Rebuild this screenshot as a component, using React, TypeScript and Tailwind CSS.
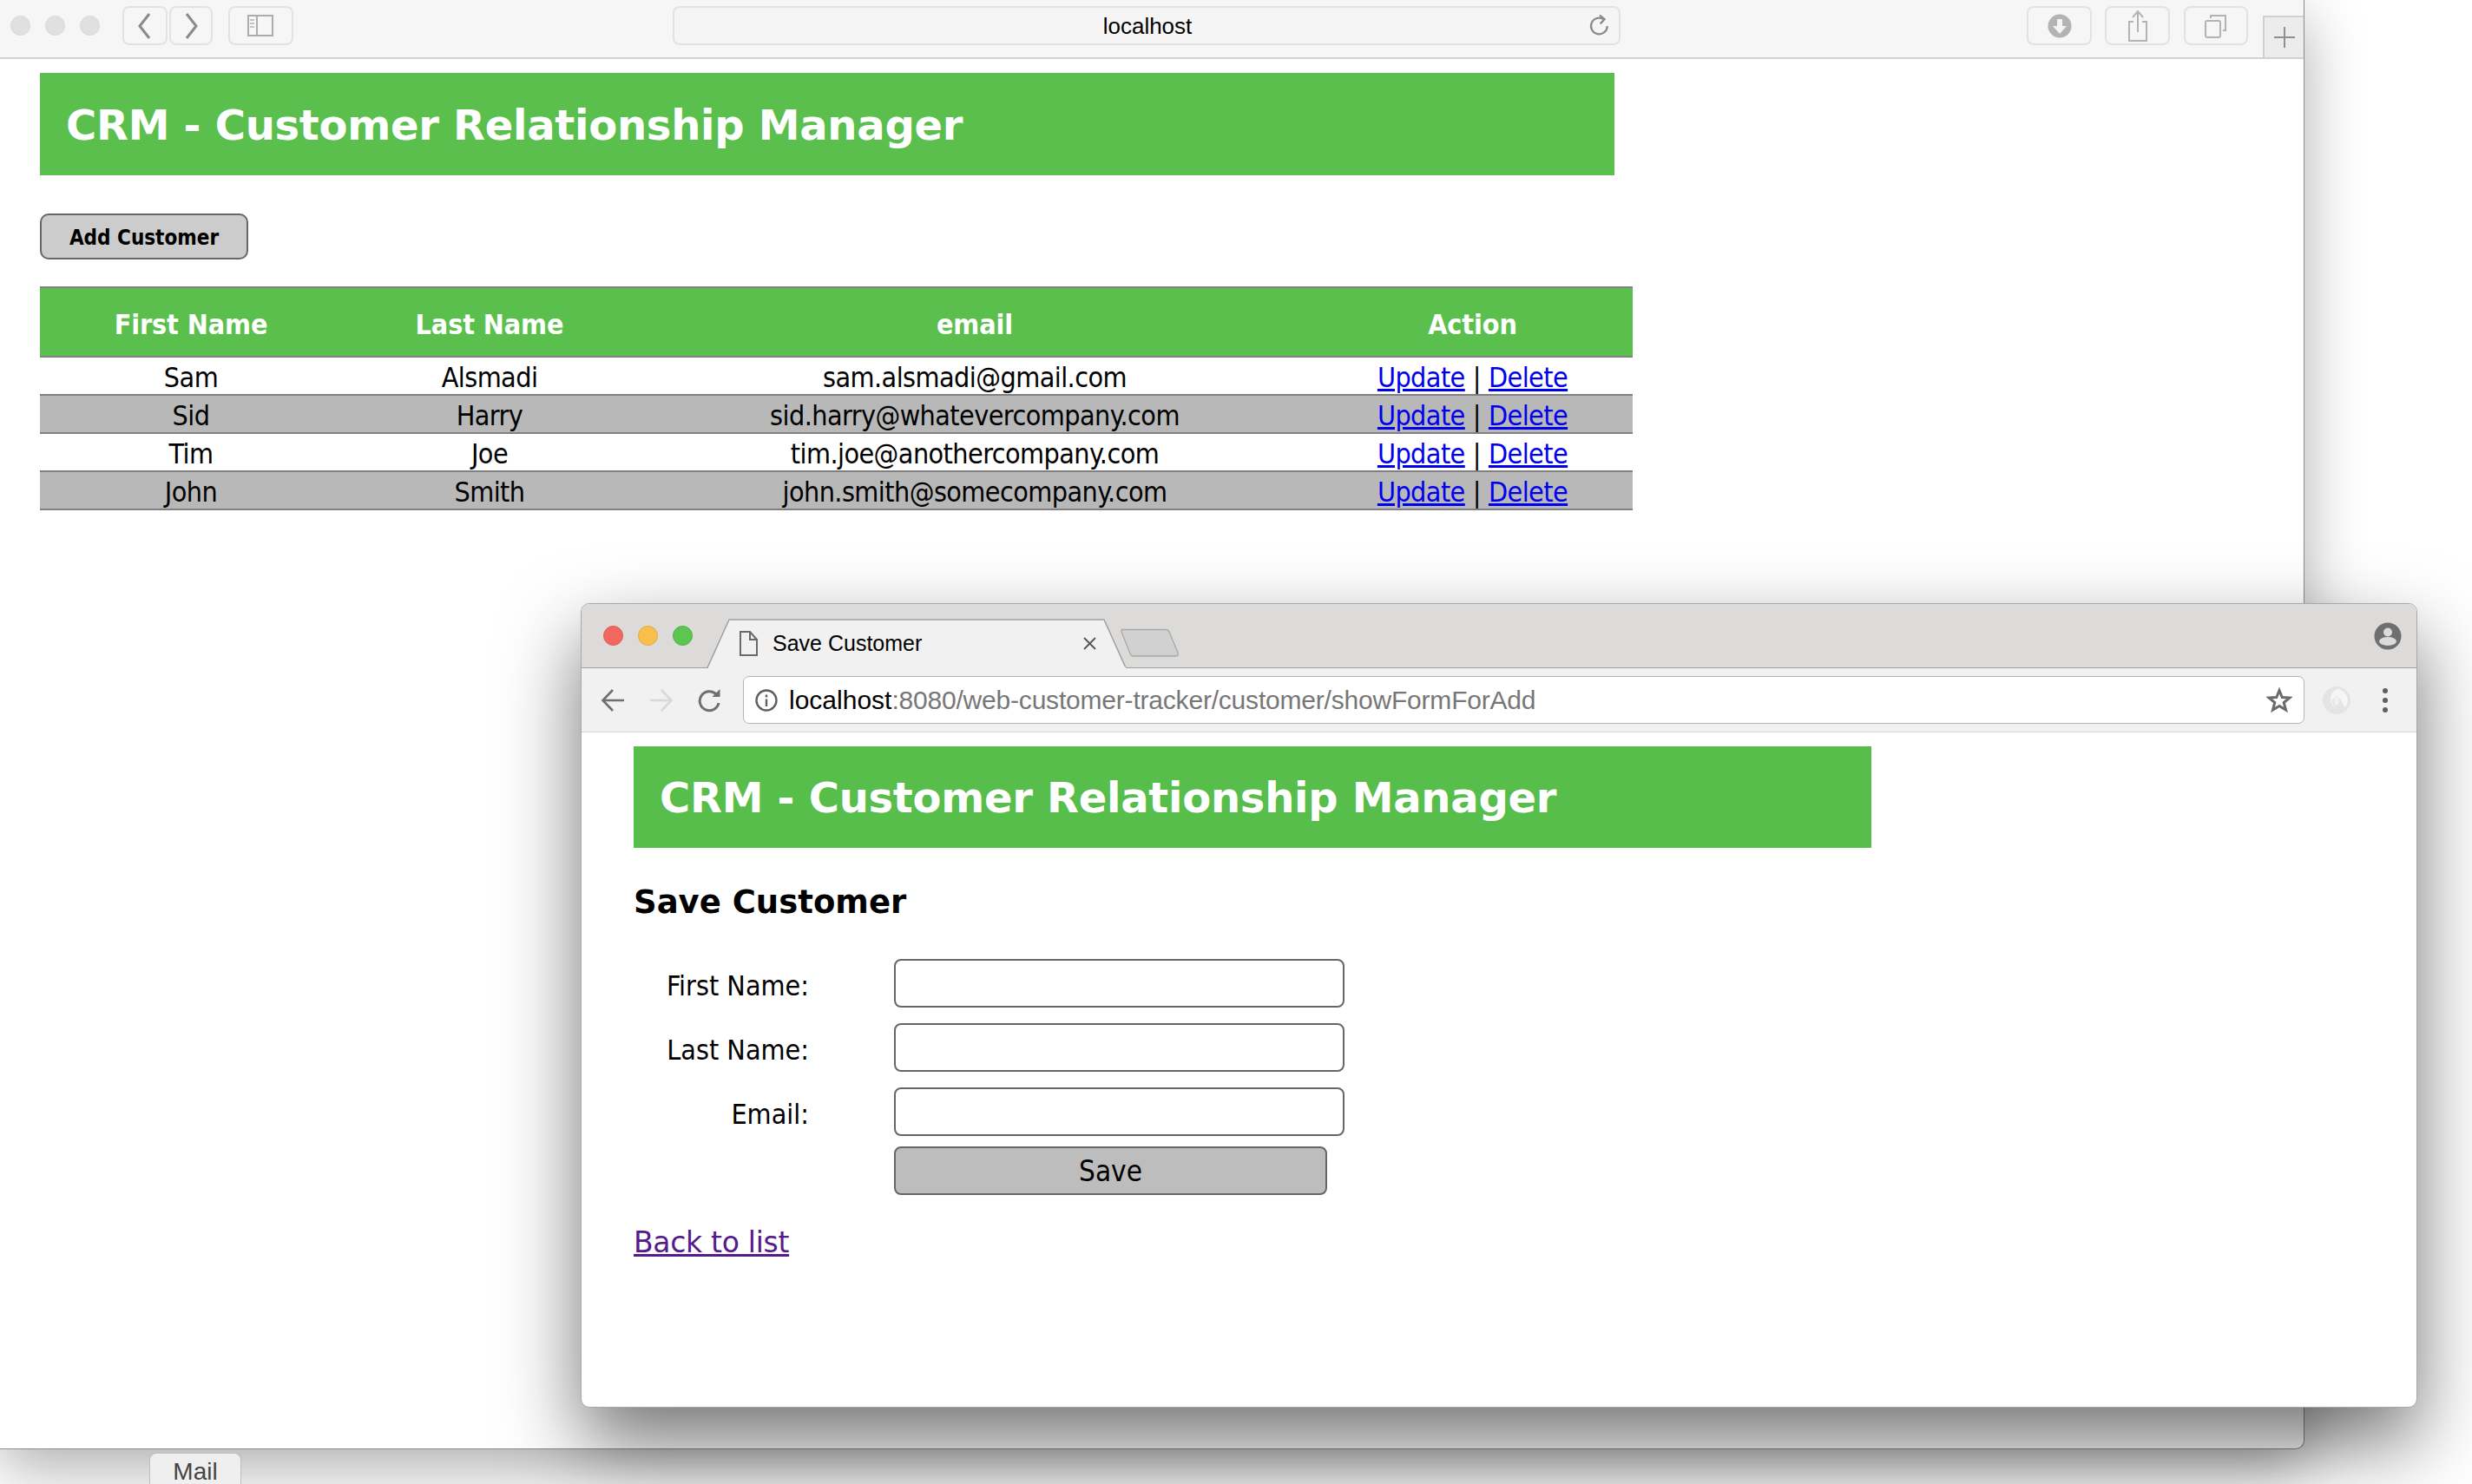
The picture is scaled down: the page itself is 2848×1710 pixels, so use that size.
const TITLE = "CRM - Customer Relationship Manager";
const rows = [
  ["Sam", "Alsmadi", "sam.alsmadi@gmail.com"],
  ["Sid", "Harry", "sid.harry@whatevercompany.com"],
  ["Tim", "Joe", "tim.joe@anothercompany.com"],
  ["John", "Smith", "john.smith@somecompany.com"],
];

function SafariButton({ className, children }: { className: string; children?: React.ReactNode }) {
  return (
    <div className={`flex h-[45px] items-center justify-center rounded-[8px] border-2 border-[#e2e2e2] bg-[#f6f6f6] ${className}`}>
      {children}
    </div>
  );
}

function BackWindow() {
  return (
    <div className="absolute left-0 top-0 flex h-[1670px] w-[2655px] flex-col rounded-br-[10px] border-r border-b border-[#8a8a8a] bg-white shadow-[0_22px_70px_rgba(0,0,0,0.32)]">
      <div className="flex h-[68px] shrink-0 items-start border-b-2 border-[#d2d2d2] bg-[#f6f6f6] pt-[7px]">
        <div className="ml-[12px] mt-[11px] flex gap-[17px]">
          <div className="h-[23px] w-[23px] rounded-full border border-[#d8d8d8] bg-[#e0e0e0]" />
          <div className="h-[23px] w-[23px] rounded-full border border-[#d8d8d8] bg-[#e0e0e0]" />
          <div className="h-[23px] w-[23px] rounded-full border border-[#d8d8d8] bg-[#e0e0e0]" />
        </div>
        <SafariButton className="ml-[26px] w-[52px]">
          <svg width="20" height="34" viewBox="0 0 20 34" fill="none" stroke="#8a8a8a" strokeWidth="3"><path d="M15 3 L4 17 L15 31" /></svg>
        </SafariButton>
        <SafariButton className="ml-[2px] w-[50px]">
          <svg width="20" height="34" viewBox="0 0 20 34" fill="none" stroke="#8a8a8a" strokeWidth="3"><path d="M5 3 L16 17 L5 31" /></svg>
        </SafariButton>
        <SafariButton className="ml-[18px] w-[75px]">
          <svg width="32" height="25" viewBox="0 0 32 25" fill="none" stroke="#adadad" strokeWidth="2"><rect x="1" y="1" width="28" height="23" /><path d="M11 1 V24" /><path d="M3 6 H8 M3 10 H8 M3 14 H8" stroke="#c4c4c4" /></svg>
        </SafariButton>
        <div className="relative ml-[437px] flex h-[45px] w-[1092px] items-center justify-center rounded-[8px] border-2 border-[#e2e2e2] bg-[#f5f5f5] font-['Liberation_Sans',sans-serif] text-[26px] text-black">
          <span className="ml-[2px] mt-[2px]">localhost</span>
          <svg className="absolute right-[7px] top-[6px]" width="30" height="30" viewBox="0 0 24 24" fill="none" stroke="#8a8a8a" strokeWidth="1.8"><path d="M19 12a7.5 7.5 0 1 1-3.4-6.3" /><path d="M12 2 L16.5 5.7 L12.5 10" /></svg>
        </div>
        <SafariButton className="ml-[468px] w-[75px]">
          <svg width="28" height="28" viewBox="0 0 28 28"><circle cx="14" cy="14" r="13.5" fill="#b3b3b3" /><path d="M11 6h6v8h5l-8 9-8-9h5z" fill="#f4f4f4" /></svg>
        </SafariButton>
        <SafariButton className="ml-[15px] w-[75px]">
          <svg width="24" height="38" viewBox="0 0 24 38" fill="none" stroke="#b3b3b3" strokeWidth="2"><path d="M7 14H2v22h20V14h-5" /><path d="M12 26V2M6 9l6-7 6 7" /></svg>
        </SafariButton>
        <SafariButton className="ml-[16px] w-[74px]">
          <svg width="26" height="28" viewBox="0 0 26 28" fill="none" stroke="#b3b3b3" strokeWidth="2"><rect x="1" y="8" width="17" height="19" rx="2" /><path d="M7 5V2h17v17h-3" /></svg>
        </SafariButton>
        <div className="ml-[17px] mt-[11px] flex h-[48px] w-[47px] items-center justify-center self-start border-l-2 border-t-2 border-[#d0d0d0] bg-[#ececec]">
          <svg width="24" height="24" viewBox="0 0 24 24" stroke="#8f8f8f" strokeWidth="2"><path d="M0 12H24M12 0V24" /></svg>
        </div>
      </div>

      <div className="flex flex-col pl-[46px] pt-[16px] font-['DejaVu_Sans_Condensed','DejaVu_Sans',sans-serif]">
        <div className="flex h-[118px] w-[1814px] items-center bg-[#5bbf4e] pl-[30px] pt-[2px] font-['DejaVu_Sans',sans-serif] text-[48px] font-bold tracking-[-0.27px] text-white">
          {TITLE}
        </div>
        <button className="mt-[44px] h-[53px] w-[240px] rounded-[10px] border-2 border-[#666666] bg-[#cccccc] pt-[2px] text-[24px] font-bold text-black">
          Add Customer
        </button>
        <table className="mt-[31px] w-[1835px] table-fixed border-separate border-spacing-0 text-center text-[32px] tracking-[-0.57px] text-black">
          <colgroup>
            <col className="w-[348px]" />
            <col className="w-[340px]" />
            <col className="w-[778px]" />
            <col className="w-[369px]" />
          </colgroup>
          <thead>
            <tr className="font-bold tracking-[-0.1px] text-white">
              {["First Name", "Last Name", "email", "Action"].map((h) => (
                <th key={h} className="h-[82px] border-y-2 border-[#808080] bg-[#5bbf4e] p-0 pt-[6px]">{h}</th>
              ))}
            </tr>
          </thead>
          <tbody>
            {rows.map((r, i) => (
              <tr key={r[0]} className={i % 2 ? "bg-[#b8b8b8]" : "bg-white"}>
                {r.map((c) => (
                  <td key={c} className="h-[44px] border-b-2 border-[#808080] p-0 pt-[4px] leading-[38px]">{c}</td>
                ))}
                <td className="h-[44px] border-b-2 border-[#808080] p-0 pt-[4px] leading-[38px]">
                  <a href="#" className="text-[#0000ee] underline">Update</a>
                  <span className="mx-[9px]">|</span>
                  <a href="#" className="text-[#0000ee] underline">Delete</a>
                </td>
              </tr>
            ))}
          </tbody>
        </table>
      </div>
    </div>
  );
}

function FrontWindow() {
  return (
    <div className="absolute left-[669px] top-[695px] flex h-[927px] w-[2116px] flex-col overflow-hidden rounded-[10px] border border-[#a8a8a8] bg-white shadow-[0_40px_90px_rgba(0,0,0,0.55)]">
      <div className="flex h-[74px] shrink-0 items-center border-b border-[#a0a0a0] bg-[#dcdbda]">
        <div className="ml-[25px] flex gap-[17px]">
          <div className="h-[23px] w-[23px] rounded-full border border-[#dc5a50] bg-[#f2685e]" />
          <div className="h-[23px] w-[23px] rounded-full border border-[#e0a93c] bg-[#f8c04a]" />
          <div className="h-[23px] w-[23px] rounded-full border border-[#4fae44] bg-[#5cc650]" />
        </div>
        <div className="relative z-10 ml-[16px] -mb-px h-[57px] w-[485px] self-end">
          <svg className="absolute inset-0" width="485" height="57" viewBox="0 0 485 57">
            <path d="M0 56.5 H1 L26 1 H458 L483 56.5 H485" fill="#f1f1f1" stroke="#a0a0a0" strokeWidth="1.5" />
            <rect x="2" y="55.5" width="481" height="2" fill="#f1f1f1" />
          </svg>
          <div className="relative flex h-full items-center pl-[38px] font-['Liberation_Sans',sans-serif] text-[25px] text-black">
            <svg width="21" height="29" viewBox="0 0 21 29" fill="none" stroke="#6a6a6a" strokeWidth="2"><path d="M1 1H12L20 10V28H1Z" /><path d="M12 1V10H20" /></svg>
            <span className="ml-[17px]">Save Customer</span>
            <svg className="ml-[186px]" width="15" height="15" viewBox="0 0 15 15" stroke="#555" strokeWidth="1.8"><path d="M1 1L14 14M14 1L1 14" /></svg>
          </div>
        </div>
        <svg className="-ml-[8px] mt-[16px]" width="68" height="33" viewBox="0 0 68 33">
          <path d="M2 1.5 H52 Q55 1.5 56 4 L66 28 Q67 32 63 32 H15 Q12 32 11 29 L1 4 Q0.5 1.5 2 1.5 Z" fill="#d2d1d1" stroke="#a8a8a8" strokeWidth="1.3" />
        </svg>
        <svg className="ml-auto mr-[17px]" width="32" height="32" viewBox="0 0 32 32">
          <circle cx="16" cy="16" r="15.5" fill="#6f6f6f" />
          <circle cx="16" cy="11.5" r="5" fill="#dcdbda" />
          <ellipse cx="16" cy="22" rx="10" ry="5" fill="#dcdbda" />
        </svg>
      </div>

      <div className="flex h-[74px] shrink-0 items-center border-b border-[#d5d5d5] bg-[#f1f1f1]">
        <svg className="ml-[22px]" width="28" height="28" viewBox="0 0 28 28" fill="none" stroke="#6f6f6f" strokeWidth="2.6"><path d="M27 14H3M14 2L2.5 14L14 26" /></svg>
        <svg className="ml-[28px]" width="28" height="28" viewBox="0 0 28 28" fill="none" stroke="#d8d8d8" strokeWidth="2.6"><path d="M1 14H25M14 2L25.5 14L14 26" /></svg>
        <svg className="ml-[28px]" width="28" height="28" viewBox="0 0 28 28" fill="none" stroke="#6f6f6f" strokeWidth="3"><path d="M24 17a11 11 0 1 1-3-10" /><path d="M25.5 1v9h-9" fill="#6f6f6f" stroke="none" /></svg>
        <div className="ml-[24px] flex h-[55px] w-[1799px] items-center rounded-[7px] border border-[#b4b4b4] bg-white pl-[13px] pr-[13px] font-['Liberation_Sans',sans-serif] text-[30px]">
          <svg width="26" height="26" viewBox="0 0 26 26" fill="none" stroke="#5f5f5f" strokeWidth="2.4"><circle cx="13" cy="13" r="11.5" /><path d="M13 11.5V20M13 6.5V9.5" /></svg>
          <span className="ml-[13px] text-black">localhost</span>
          <span className="tracking-[-0.2px] text-[#777777]">:8080/web-customer-tracker/customer/showFormForAdd</span>
          <svg className="ml-auto" width="30" height="30" viewBox="0 0 30 30" fill="none" stroke="#6a6a6a" strokeWidth="3"><path d="M15 3.5 L18.2 11.5 L27 12 L20.2 17.5 L22.5 26 L15 21.4 L7.5 26 L9.8 17.5 L3 12 L11.8 11.5 Z" /></svg>
        </div>
        <svg className="ml-[21px]" width="32" height="32" viewBox="0 0 32 32">
          <circle cx="16" cy="16" r="16" fill="#e4e4e4" />
          <path d="M16 3a13 13 0 0 1 10 21c-3-2-3-7-6-10-3-3-8-2-9 2 0 3 1 7 5 10A13 13 0 0 1 16 3Z" fill="#f6f6f6" />
          <ellipse cx="16" cy="16" rx="3" ry="6" fill="#f1f1f1" />
        </svg>
        <div className="ml-[37px] flex flex-col gap-[5px]">
          <div className="h-[6px] w-[6px] rounded-full bg-[#5f5f5f]" />
          <div className="h-[6px] w-[6px] rounded-full bg-[#5f5f5f]" />
          <div className="h-[6px] w-[6px] rounded-full bg-[#5f5f5f]" />
        </div>
      </div>

      <div className="flex flex-col pl-[60px] pt-[16px] font-['DejaVu_Sans_Condensed','DejaVu_Sans',sans-serif] text-black">
        <div className="flex h-[117px] w-[1426px] items-center bg-[#57bd4b] pl-[30px] font-['DejaVu_Sans',sans-serif] text-[48px] font-bold tracking-[-0.27px] text-white">
          {TITLE}
        </div>
        <h2 className="mt-[43px] h-[40px] font-['DejaVu_Sans',sans-serif] text-[37px] font-bold leading-[40px]">Save Customer</h2>
        <div className="mt-[45px] grid w-[819px] grid-cols-[202px_519px] gap-x-[98px] gap-y-[18px] text-[32px]">
          {["First Name:", "Last Name:", "Email:"].map((l) => (
            <div key={l} className="contents">
              <label className="flex h-[56px] items-center justify-end pt-[5px]">{l}</label>
              <input className="h-[56px] w-[519px] rounded-[8px] border-2 border-[#666666] bg-white" />
            </div>
          ))}
        </div>
        <button className="ml-[300px] mt-[12px] h-[56px] w-[499px] rounded-[8px] border-2 border-[#666666] bg-[#bdbdbd] pt-[2px] text-[33px] text-black">
          Save
        </button>
        <a href="#" className="mt-[30px] self-start font-['DejaVu_Sans',sans-serif] text-[33px] tracking-[-0.3px] text-[#551a8b] underline">Back to list</a>
      </div>
    </div>
  );
}

export default function App() {
  return (
    <div className="relative h-[1710px] w-[2848px] overflow-hidden bg-white">
      <BackWindow />
      <div className="absolute left-[172px] top-[1674px] flex h-[36px] w-[106px] justify-center rounded-t-[8px] border border-b-0 border-[#bdbdbd] bg-[#efefef] pt-[9px] font-['Liberation_Sans',sans-serif] text-[28px] leading-[24px] text-[#444444]">
        Mail
      </div>
      <FrontWindow />
    </div>
  );
}
